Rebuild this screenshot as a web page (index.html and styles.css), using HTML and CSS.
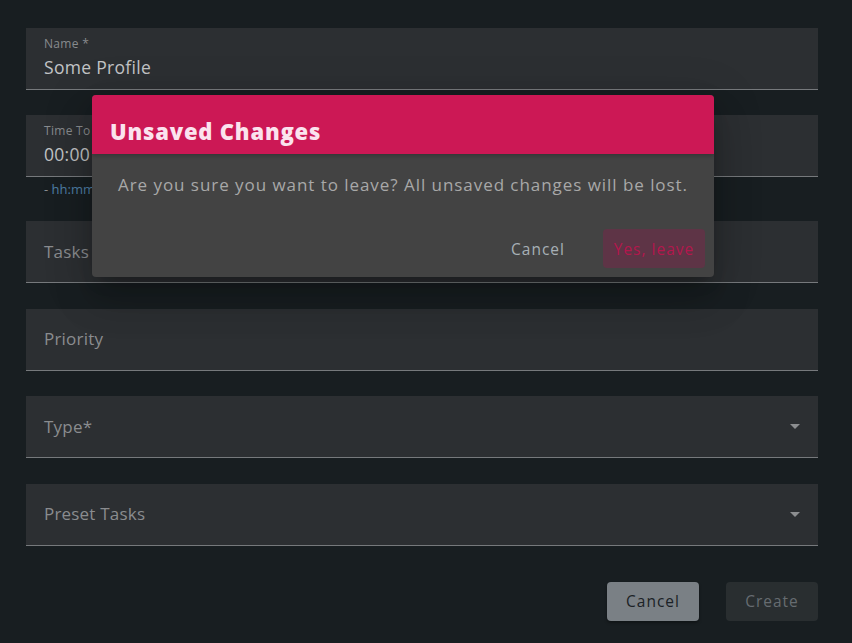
FILE: index.html
```html
<!DOCTYPE html>
<html lang="en">
<head>
<meta charset="utf-8">
<title>New Profile</title>
<link rel="stylesheet" href="styles.css">
</head>
<body>
<main class="page">
  <form class="form">
    <div class="field">
      <div class="field-box">
        <span class="field-label">Name *</span>
        <span class="field-value">Some Profile</span>
      </div>
    </div>
    <div class="field field-hinted">
      <div class="field-box">
        <span class="field-label">Time To Complete *</span>
        <span class="field-value">00:00</span>
      </div>
      <div class="field-hint">- <span class="hint-link">hh:mm</span> format</div>
    </div>
    <div class="field">
      <div class="field-box field-empty">
        <span class="field-placeholder">Tasks Per Day</span>
      </div>
    </div>
    <div class="field">
      <div class="field-box field-empty">
        <span class="field-placeholder">Priority</span>
      </div>
    </div>
    <div class="field">
      <div class="field-box field-empty field-select">
        <span class="field-placeholder">Type*</span>
        <span class="caret"></span>
      </div>
    </div>
    <div class="field">
      <div class="field-box field-empty field-select">
        <span class="field-placeholder">Preset Tasks</span>
        <span class="caret"></span>
      </div>
    </div>
    <div class="actions">
      <button type="button" class="btn btn-cancel">Cancel</button>
      <button type="button" class="btn btn-create">Create</button>
    </div>
  </form>

  <div class="dialog" role="dialog">
    <div class="dialog-head">Unsaved Changes</div>
    <div class="dialog-body">Are you sure you want to leave? All unsaved changes will be lost.</div>
    <div class="dialog-actions">
      <button type="button" class="dbtn dbtn-cancel">Cancel</button>
      <button type="button" class="dbtn dbtn-leave">Yes, leave</button>
    </div>
  </div>
</main>
</body>
</html>
```
FILE: styles.css
```css
* { box-sizing: border-box; }
html, body {
  margin: 0;
  padding: 0;
  background: #181e21;
  height: 100%;
}
body {
  font-family: "Open Sans", "Lato", sans-serif;
  color: #bfc1c3;
}
.page {
  position: relative;
  width: 852px;
  height: 643px;
  overflow: hidden;
  padding: 28px 34px 0 26px;
}
.form {
  display: flex;
  flex-direction: column;
}
.field {
  margin-bottom: 25.5px;
}
.field:first-child {
  margin-bottom: 25px;
}
.field-hinted {
  margin-bottom: 23px;
}
.field-box {
  height: 62px;
  background: #2c2f32;
  border-bottom: 1px solid #76797c;
  padding: 0 18px;
  display: flex;
  flex-direction: column;
  justify-content: center;
  position: relative;
}
.field-label {
  font-size: 12px;
  line-height: 14px;
  color: #888b8e;
  letter-spacing: 0.3px;
  margin-top: -2px;
}
.field-value {
  font-size: 17.5px;
  line-height: 22px;
  margin-top: 5px;
  color: #c2c4c6;
  letter-spacing: 0.3px;
}
.field-placeholder {
  font-size: 17px;
  line-height: 22px;
  color: #8a8c8f;
  letter-spacing: 0.2px;
}
.field-select {
  flex-direction: row;
  align-items: center;
  justify-content: space-between;
}
.caret {
  width: 0;
  height: 0;
  border-left: 5px solid transparent;
  border-right: 5px solid transparent;
  border-top: 5px solid #8c8e90;
  margin-right: 0;
}
.field-hint {
  padding: 4px 0 0 18px;
  font-size: 13px;
  line-height: 17px;
  color: #8a8d90;
  height: 21px;
}
.hint-link { color: #4e7fa6; }
.actions {
  display: flex;
  justify-content: flex-end;
  gap: 27px;
  margin-top: 10.5px;
}
.btn {
  font-family: inherit;
  height: 39px;
  width: 92px;
  border: none;
  border-radius: 4px;
  font-size: 15.5px;
  letter-spacing: 1px;
  padding: 0;
}
.btn-cancel {
  background: #7a8085;
  color: #1b2226;
  box-shadow: 0 2px 3px rgba(0,0,0,0.35);
}
.btn-create {
  background: #292e30;
  color: #666c70;
}

.dialog {
  position: absolute;
  left: 92px;
  top: 95px;
  width: 622px;
  height: 182px;
  background: #434343;
  border-radius: 4px;
  overflow: hidden;
  box-shadow: 0 11px 15px -7px rgba(0,0,0,0.2), 0 24px 38px 3px rgba(0,0,0,0.14), 0 9px 46px 8px rgba(0,0,0,0.12);
  display: flex;
  flex-direction: column;
}
.dialog-head {
  height: 59px;
  background: #cc1855;
  color: #fbe3ee;
  font-weight: 800;
  font-size: 22px;
  line-height: 28px;
  letter-spacing: 0.8px;
  padding: 22px 18px 0;
  box-shadow: 0 2px 4px rgba(0,0,0,0.2);
}
.dialog-body {
  padding: 20px 26px 0;
  font-size: 17px;
  line-height: 22px;
  color: #a8a8a8;
  letter-spacing: 0.95px;
  white-space: nowrap;
}
.dialog-actions {
  margin-top: auto;
  display: flex;
  justify-content: flex-end;
  align-items: center;
  gap: 14px;
  padding: 0 9px 9px 0;
}
.dbtn {
  font-family: inherit;
  height: 39px;
  border: none;
  border-radius: 4px;
  font-size: 15.5px;
  letter-spacing: 1px;
  background: transparent;
  padding: 0;
}
.dbtn-cancel {
  width: 102px;
  color: #a7b0b6;
}
.dbtn-leave {
  width: 102px;
  background: #5e3446;
  color: #b3174d;
}
```
